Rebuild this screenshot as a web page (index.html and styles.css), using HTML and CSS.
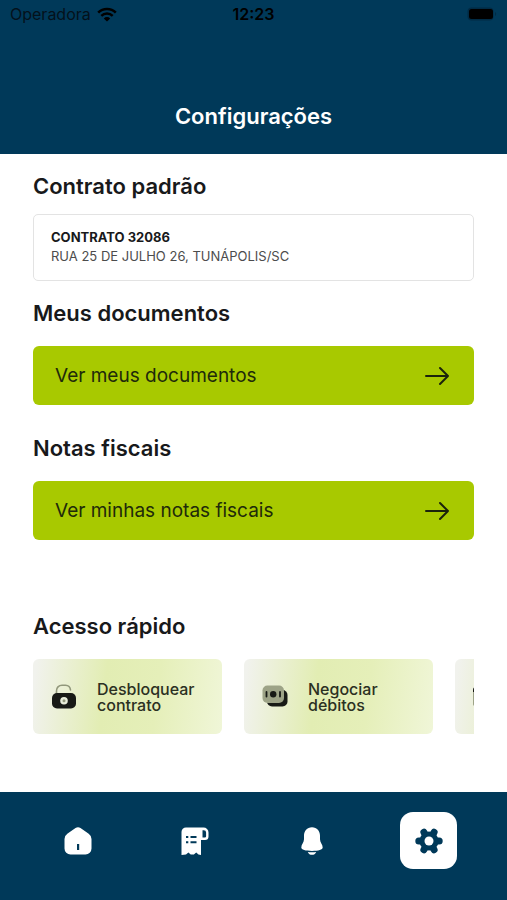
FILE: index.html
```html
<!DOCTYPE html>
<html lang="pt-BR">
<head>
<meta charset="utf-8">
<meta name="viewport" content="width=device-width, initial-scale=1">
<title>Configurações</title>
<link rel="stylesheet" href="styles.css">
</head>
<body>
<div class="app">
  <header class="header">
    <div class="status">
      <div class="carrier">
        <span>Operadora</span>
        <svg class="wifi" viewBox="0 0 20 15" aria-hidden="true"><path d="M1.2 5.6a12.5 12.5 0 0 1 17.600 0" stroke-width="2.600"/><path d="M4.300 8.800a8.100 8.100 0 0 1 11.400 0" stroke-width="2.400"/><path class="dot" d="M10 14.600 6.800 11.400a4.500 4.500 0 0 1 6.400 0z"/></svg>
      </div>
      <time class="clock">12:23</time>
      <svg class="battery" viewBox="0 0 30 14" aria-hidden="true"><rect class="shell" x="0.500" y="0.500" width="26" height="13" rx="4"/><rect x="2" y="2" width="24" height="10" rx="2.500"/><path class="shell" d="M28 5c1.500.5 1.500 3.500 0 4z"/></svg>
    </div>
    <h1 class="title">Configurações</h1>
  </header>

  <main class="content">
    <section>
      <h2 class="heading">Contrato padrão</h2>
      <button class="contract" type="button">
        <strong>CONTRATO 32086</strong>
        <span>RUA 25 DE JULHO 26, TUNÁPOLIS/SC</span>
      </button>
    </section>
    <section class="block">
      <h2 class="heading">Meus documentos</h2>
      <a class="action" href="#documentos">
        <span>Ver meus documentos</span>
        <svg class="arrow" viewBox="0 0 24 20" aria-hidden="true"><path d="M1 10h22M15 2l8 8-8 8"/></svg>
      </a>
    </section>
    <section class="block">
      <h2 class="heading">Notas fiscais</h2>
      <a class="action" href="#notas">
        <span>Ver minhas notas fiscais</span>
        <svg class="arrow" viewBox="0 0 24 20" aria-hidden="true"><path d="M1 10h22M15 2l8 8-8 8"/></svg>
      </a>
    </section>
    <section class="quick">
      <h2 class="heading">Acesso rápido</h2>
      <div class="cards">
        <button class="card" type="button">
          <svg class="card-icon" viewBox="0 0 26 26" aria-hidden="true"><path d="M5.500 9V7a5.500 5.500 0 0 1 5.500-5.800h3.500A5.300 5.300 0 0 1 19.500 6" fill="none" stroke="#92987c" stroke-width="1.600" stroke-linecap="round"/><rect x="1" y="9" width="24" height="15.500" rx="5" fill="#181a16"/><circle cx="13" cy="16.700" r="3.800" fill="#e8edda"/><circle cx="13" cy="16.700" r="1.500" fill="#92987c"/></svg>
          <span>Desbloquear contrato</span>
        </button>
        <button class="card" type="button">
          <svg class="card-icon" viewBox="0 0 26 26" aria-hidden="true"><rect x="5" y="6" width="20.500" height="16.500" rx="5" fill="#181a16"/><rect x="0.500" y="1.500" width="21.500" height="17.500" rx="5" fill="#9da387"/><circle cx="11.200" cy="10.200" r="3.200" fill="#181a16"/><path d="M4.500 8v4.500M18 8v4.500" stroke="#181a16" stroke-width="1.800" stroke-linecap="round"/></svg>
          <span>Negociar débitos</span>
        </button>
        <button class="card" type="button" aria-label="Faturas">
          <svg class="card-icon" viewBox="0 0 26 26" aria-hidden="true"><rect x="0" y="5" width="22" height="17" rx="2" fill="#9da387"/><path d="M0 8V6a3 3 0 0 1 3-3h16a3 3 0 0 1 3 3v2z" fill="#181a16"/></svg>
        </button>
      </div>
    </section>
  </main>

  <nav class="tabs" aria-label="Principal">
    <a class="tab" href="#inicio" aria-label="Início">
      <svg viewBox="0 0 28 28" aria-hidden="true"><path fill-rule="evenodd" d="M11.500 1.100a4.800 4.800 0 0 1 5 0l8.200 5.600Q27.500 8.700 27.500 12v9.500a6 6 0 0 1-6 6h-15a6 6 0 0 1-6-6V12Q.5 8.700 3.300 6.700zM13 17v6h2.200v-6z"/></svg>
    </a>
    <a class="tab" href="#faturas" aria-label="Faturas">
      <svg viewBox="0 0 28 28" aria-hidden="true"><path fill-rule="evenodd" d="M5 .5h17.500A5 5 0 0 1 27.500 5.500v4a3.500 3.500 0 0 1-3.500 3.500h-4v15l-2.500-.5-2.300-2-2.300 2h-3.200l-2.300-2-2.400 2L.5 28V5A4.500 4.500 0 0 1 5 .5zM21.500 3.200v7.300h2.300a1.300 1.300 0 0 0 1.300-1.300V5.500a2.300 2.300 0 0 0-2.300-2.300z"/><path class="mark" d="M5 10h2.300M9.500 10h6M5 15.300h2.300M9.500 15.300h6"/></svg>
    </a>
    <a class="tab" href="#avisos" aria-label="Avisos">
      <svg viewBox="0 0 28 28" aria-hidden="true"><path d="M14 .3c5 0 8 3.900 8 8.500v3.500c0 3.200 2.700 5.200 2.700 8.200 0 2.200-4.200 3.400-10.700 3.400S3.300 22.700 3.300 20.500C3.300 17.500 6 15.500 6 12.300V8.800C6 4.200 9 .3 14 .3z"/><path d="M9.800 24.900q4.200.6 8.400 0c-.8 1.900-2.300 2.900-4.200 2.900s-3.400-1-4.200-2.900z"/></svg>
    </a>
    <a class="tab active" href="#configuracoes" aria-label="Configurações" aria-current="page">
      <svg viewBox="0 0 28 28" aria-hidden="true"><g class="teeth"><path d="M3.800 14h20.400"/><path d="M8.900 5.170l10.200 17.660"/><path d="M19.100 5.170 8.900 22.830"/></g><circle cx="14" cy="14" r="9.500"/><circle class="hole" cx="14" cy="14" r="4.500"/></svg>
    </a>
  </nav>
</div>
</body>
</html>
```
FILE: styles.css
```css
:root {
  --navy: #003959;
  --green: #a8c900;
}

* {
  box-sizing: border-box;
}

body {
  margin: 0;
  background: #fff;
  color: #18191b;
  font-family: Inter, "Liberation Sans", sans-serif;
  font-optical-sizing: none;
}

button {
  font: inherit;
  color: inherit;
  text-align: left;
}

a {
  color: inherit;
  text-decoration: none;
}

.app {
  min-height: 100vh;
  display: flex;
  flex-direction: column;
}

.header {
  background: var(--navy);
  padding-bottom: 24px;
}

.status {
  display: grid;
  grid-template-columns: 1fr auto 1fr;
  align-items: center;
  height: 28px;
  padding: 0 10px;
  color: #000;
  font-size: 16px;
}

.carrier {
  display: flex;
  align-items: center;
  gap: 6px;
  color: #04111b;
}

.wifi {
  width: 20px;
  height: 15px;
  fill: none;
  stroke: #000;
}

.wifi .dot {
  fill: #000;
  stroke: none;
}

.clock {
  font-weight: 600;
}

.battery {
  width: 30px;
  height: 14px;
  justify-self: end;
}

.battery .shell {
  fill: #002b45;
}

.title {
  margin: 74px 0 0;
  color: #fff;
  font-size: 22px;
  line-height: 28px;
  font-weight: 600;
  text-align: center;
}

.content {
  flex: 1;
  padding: 18px 33px 56px;
}

.heading {
  margin: 0;
  font-size: 22px;
  line-height: 28px;
  font-weight: 600;
}

.contract {
  display: flex;
  flex-direction: column;
  width: 100%;
  margin-top: 14px;
  padding: 13px 17px 14px;
  border: 1px solid #e3e3e3;
  border-radius: 5px;
  background: #fff;
  font-size: 13px;
  line-height: 19px;
}

.contract strong {
  font-weight: 700;
}

.contract span {
  color: #4c4c4c;
}

.block {
  margin-top: 18px;
}

.block + .block {
  margin-top: 29px;
}

.action {
  display: flex;
  align-items: center;
  justify-content: space-between;
  height: 59px;
  margin-top: 19px;
  padding: 0 25px 0 22px;
  border-radius: 6px;
  background: var(--green);
  color: #202a0a;
  font-size: 19px;
}

.arrow {
  width: 24px;
  height: 20px;
  fill: none;
  stroke: #1b230b;
  stroke-width: 2;
  stroke-linecap: round;
  stroke-linejoin: round;
}

.quick {
  margin-top: 72px;
}

.cards {
  display: flex;
  gap: 22px;
  margin-top: 19px;
  overflow: hidden;
}

.card {
  display: flex;
  align-items: center;
  gap: 20px;
  flex: 0 0 189px;
  height: 75px;
  padding: 0 18px;
  border: 0;
  border-radius: 6px;
  background: linear-gradient(97deg, #f1f2ed 2%, #e2edb3 38%, #e5efb9 65%, #f0f6d8 100%);
  color: #2b3022;
  font-size: 16px;
  line-height: 16px;
  font-weight: 500;
}

.card-icon {
  flex: none;
  width: 26px;
  height: 26px;
}

.tabs {
  display: grid;
  grid-template-columns: repeat(4, 1fr);
  justify-items: center;
  padding: 20px 20px 31px;
  background: var(--navy);
}

.tab {
  display: grid;
  place-items: center;
  width: 57px;
  height: 57px;
  border-radius: 13px;
}

.tab svg {
  width: 28px;
  height: 28px;
  fill: #fff;
}

.tab .mark {
  fill: none;
  stroke: var(--navy);
  stroke-width: 2;
}

.tab.active {
  background: #fff;
}

.tab.active svg {
  fill: var(--navy);
}

.teeth {
  stroke: var(--navy);
  stroke-width: 7;
  stroke-linecap: round;
}

.tab .hole {
  fill: #fff;
}
```
